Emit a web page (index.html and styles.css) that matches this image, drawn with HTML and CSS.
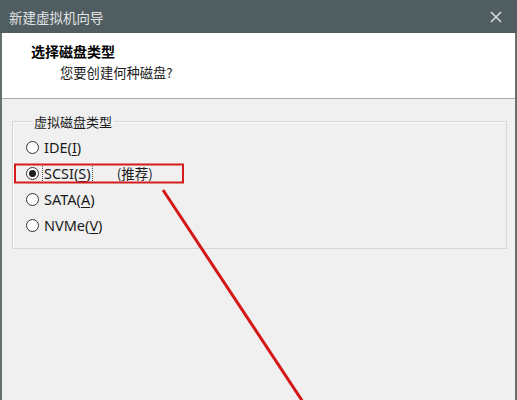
FILE: index.html
```html
<!DOCTYPE html>
<html lang="zh-CN">
<head>
<meta charset="utf-8">
<title>新建虚拟机向导</title>
<link rel="stylesheet" href="styles.css">
</head>
<body>
<div class="window">
  <div class="titlebar">
    <span class="title">新建虚拟机向导</span>
    <svg class="close" width="12" height="12" viewBox="0 0 12 12"><path d="M1 1 L11 11 M11 1 L1 11" stroke="#e4e6e6" stroke-width="1.4" fill="none"/></svg>
  </div>
  <div class="client">
    <div class="header">
      <div class="heading">选择磁盘类型</div>
      <div class="sub">您要创建何种磁盘?</div>
    </div>
    <div class="body">
      <fieldset class="group">
        <legend>虚拟磁盘类型</legend>
        <div class="option"><span class="radio"></span><span class="label">IDE(<u>I</u>)</span></div>
        <div class="option"><span class="radio checked"></span><span class="label focus">SCSI(<u>S</u>)</span><span class="rec">(推荐)</span></div>
        <div class="option"><span class="radio"></span><span class="label">SATA(<u>A</u>)</span></div>
        <div class="option"><span class="radio"></span><span class="label">NVMe(<u>V</u>)</span></div>
      </fieldset>
    </div>
  </div>
  <svg class="annot" width="517" height="400" viewBox="0 0 517 400">
    <rect x="15" y="164.5" width="168" height="18" fill="none" stroke="#d41c1c" stroke-width="2"/>
    <line x1="163" y1="190" x2="303" y2="402" stroke="#d41818" stroke-width="3"/>
  </svg>
</div>
</body>
</html>
```
FILE: styles.css
```css
html, body {
  margin: 0;
  padding: 0;
  background: #f0f0f0;
}
.window {
  position: relative;
  width: 517px;
  height: 400px;
  display: flex;
  flex-direction: column;
  overflow: hidden;
  font-family: "Noto Sans", "Noto Sans CJK SC", sans-serif;
  color: #1a1a1a;
}
.titlebar {
  height: 33px;
  flex: none;
  background: #515e61;
  display: flex;
  align-items: center;
  justify-content: space-between;
  padding: 0 15px 0 9px;
  box-sizing: border-box;
}
.title {
  font-family: "Noto Sans CJK SC", sans-serif;
  font-size: 13.5px;
  color: #e2e4e4;
  line-height: 18px;
}
.close {
  display: block;
}
.client {
  flex: 1;
  display: flex;
  flex-direction: column;
  border-left: 2px solid #66706f;
  border-right: 2px solid #66706f;
  background: #f0f0f0;
}
.header {
  height: 66px;
  flex: none;
  background: #ffffff;
  border-bottom: 1px solid #a9a9a9;
  box-sizing: border-box;
  padding: 8px 0 0 29px;
  font-family: "Noto Sans CJK SC", sans-serif;
  line-height: 21px;
}
.heading {
  font-size: 14px;
  font-weight: 700;
  color: #000;
}
.sub {
  font-size: 13.3px;
  padding-left: 29px;
  color: #1a1a1a;
}
.body {
  flex: 1;
  padding: 14px 8px 0 10px;
}
.group {
  margin: 0;
  padding: 4px 0 10px 13px;
  border: 1px solid #d7d7d7;
  box-shadow: inset 1px 1px 0 #fafafa;
}
.group legend {
  font-family: "Noto Sans CJK SC", sans-serif;
  font-size: 13px;
  line-height: 17px;
  padding: 0 2px;
  margin-left: 6px;
  color: #1a1a1a;
}
.option {
  display: flex;
  align-items: center;
  height: 26px;
  font-size: 14.5px;
}
.radio {
  width: 13px;
  height: 13px;
  box-sizing: border-box;
  border: 1px solid #333;
  border-radius: 50%;
  background: #fff;
  margin-right: 4px;
  display: flex;
  align-items: center;
  justify-content: center;
  flex: none;
}
.radio.checked::after {
  content: "";
  width: 7px;
  height: 7px;
  border-radius: 50%;
  background: #1f1f1f;
}
.label {
  line-height: 17px;
  padding: 0 1px;
}
.label u {
  text-underline-offset: 2px;
}
.focus {
  outline: 1px dotted #555;
  outline-offset: 0;
}
.rec {
  margin-left: 25px;
  font-size: 13.5px;
  font-family: "Noto Sans CJK SC", sans-serif;
}
.annot {
  position: absolute;
  top: 0;
  left: 0;
  pointer-events: none;
}
```
